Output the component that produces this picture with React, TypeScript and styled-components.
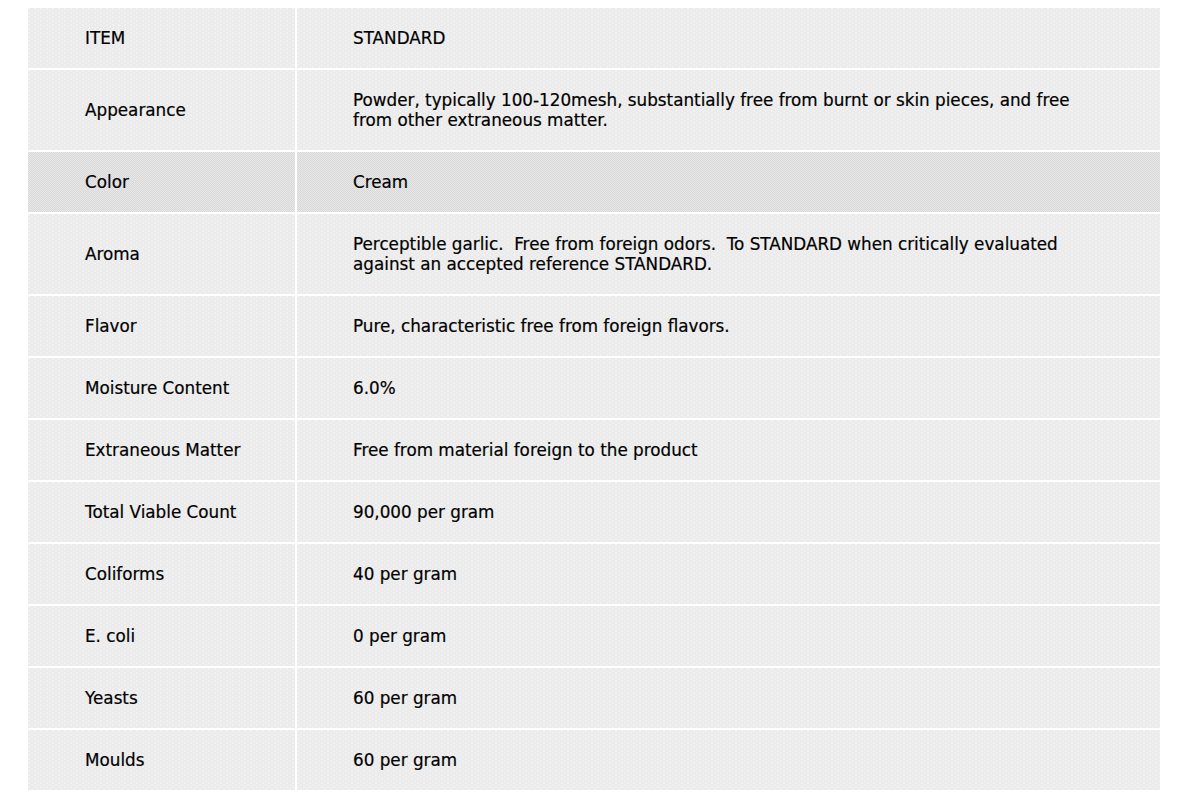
import React from "react";
import styled, { createGlobalStyle, css } from "styled-components";

const GlobalStyle = createGlobalStyle`
  html, body { margin: 0; padding: 0; background: #ffffff; }
  body { font-family: "DejaVu Sans", "Liberation Sans", sans-serif; }
`;

const Page = styled.div`
  padding: 8px 30px 13px 28px;
`;

const SpecTable = styled.div`
  display: grid;
  grid-template-columns: 267px 1fr;
  gap: 2px;
  background: #ffffff;
`;

const Row = styled.div`
  display: contents;
`;

const lightBg = css`
  background-color: #ebebeb;
  background-image:
    radial-gradient(circle at 1px 1px, rgba(255, 255, 255, 0.75) 0.5px, transparent 0.85px),
    radial-gradient(circle at 1px 1px, rgba(255, 255, 255, 0.55) 0.5px, transparent 0.85px);
  background-size: 6px 4px, 6px 4px;
  background-position: 0 0, 3px 2px;
`;

const darkBg = css`
  background-color: #e0e0e0;
  background-image: conic-gradient(#d9d9d9 25%, #e7e7e7 0 50%, #d9d9d9 0 75%, #e7e7e7 0);
  background-size: 2px 2px;
`;

const Cell = styled.div<{ $dark?: boolean; $value?: boolean }>`
  ${(p) => (p.$dark ? darkBg : lightBg)}
  display: flex;
  align-items: center;
  padding: 20px ${(p) => (p.$value ? "56px 20px 56px" : "12px 20px 57px")};
  min-height: 20px;
  font-size: 16.8px;
  line-height: 20px;
  color: #000000;
  -webkit-text-stroke: 0.2px #000000;
`;

const rows: { item: string; standard: string; dark?: boolean }[] = [
  { item: "ITEM", standard: "STANDARD" },
  {
    item: "Appearance",
    standard:
      "Powder, typically 100-120mesh, substantially free from burnt or skin pieces, and free from other extraneous matter.",
  },
  { item: "Color", standard: "Cream", dark: true },
  {
    item: "Aroma",
    standard:
      "Perceptible garlic.\u00a0 Free from foreign odors.\u00a0 To STANDARD when critically evaluated against an accepted reference STANDARD.",
  },
  { item: "Flavor", standard: "Pure, characteristic free from foreign flavors." },
  { item: "Moisture Content", standard: "6.0%" },
  { item: "Extraneous Matter", standard: "Free from material foreign to the product" },
  { item: "Total Viable Count", standard: "90,000 per gram" },
  { item: "Coliforms", standard: "40 per gram" },
  { item: "E. coli", standard: "0 per gram" },
  { item: "Yeasts", standard: "60 per gram" },
  { item: "Moulds", standard: "60 per gram" },
];

export default function App() {
  return (
    <Page>
      <GlobalStyle />
      <SpecTable role="table">
        {rows.map((r) => (
          <Row role="row" key={r.item}>
            <Cell role="cell" $dark={r.dark}>
              {r.item}
            </Cell>
            <Cell role="cell" $dark={r.dark} $value>
              {r.standard}
            </Cell>
          </Row>
        ))}
      </SpecTable>
    </Page>
  );
}
